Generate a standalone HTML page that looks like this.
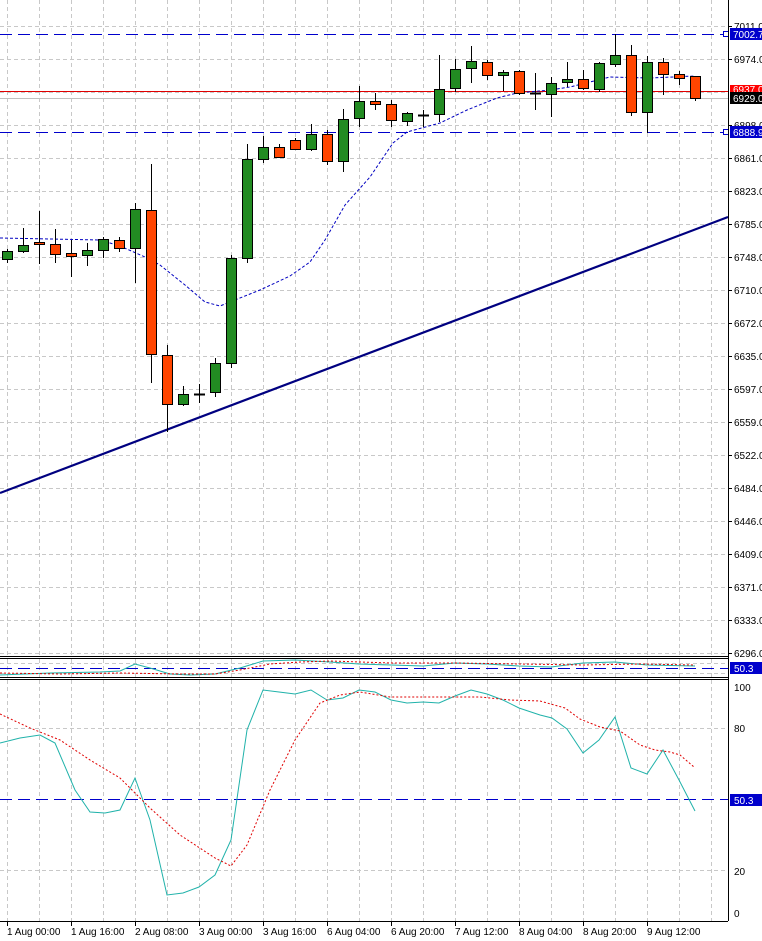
<!DOCTYPE html>
<html><head><meta charset="utf-8"><style>
html,body{margin:0;padding:0;background:#fff}
svg{display:block}
text{font-family:"Liberation Sans",sans-serif;font-size:10px;fill:#000}
</style></head><body>
<svg width="762" height="941" viewBox="0 0 762 941" xmlns="http://www.w3.org/2000/svg">
<rect width="762" height="941" fill="#fff"/>
<!-- vertical grid -->
<g stroke="#c8c8c8" stroke-dasharray="4,3" stroke-width="1">
<path d="M7.5 0V656M39.5 0V656M71.5 0V656M103.5 0V656M135.5 0V656M167.5 0V656M199.5 0V656M231.5 0V656M263.5 0V656M295.5 0V656M327.5 0V656M359.5 0V656M391.5 0V656M423.5 0V656M455.5 0V656M487.5 0V656M519.5 0V656M551.5 0V656M583.5 0V656M615.5 0V656M647.5 0V656M679.5 0V656M711.5 0V656"/>
<path d="M7.5 680V921M39.5 680V921M71.5 680V921M103.5 680V921M135.5 680V921M167.5 680V921M199.5 680V921M231.5 680V921M263.5 680V921M295.5 680V921M327.5 680V921M359.5 680V921M391.5 680V921M423.5 680V921M455.5 680V921M487.5 680V921M519.5 680V921M551.5 680V921M583.5 680V921M615.5 680V921M647.5 680V921M679.5 680V921M711.5 680V921"/>
<path d="M7.5 659V677M39.5 659V677M71.5 659V677M103.5 659V677M135.5 659V677M167.5 659V677M199.5 659V677M231.5 659V677M263.5 659V677M295.5 659V677M327.5 659V677M359.5 659V677M391.5 659V677M423.5 659V677M455.5 659V677M487.5 659V677M519.5 659V677M551.5 659V677M583.5 659V677M615.5 659V677M647.5 659V677M679.5 659V677M711.5 659V677"/>
<path d="M0 26.5H728M0 59.5H728M0 92.5H728M0 125.5H728M0 158.5H728M0 191.5H728M0 224.5H728M0 257.5H728M0 290.5H728M0 323.5H728M0 356.5H728M0 389.5H728M0 422.5H728M0 455.5H728M0 488.5H728M0 521.5H728M0 554.5H728M0 587.5H728M0 620.5H728M0 653.5H728"/>
<path d="M0 728.5H728M0 870.5H728M0 663.5H728M0 673.5H728"/>
</g>
<!-- horizontal level lines -->
<path d="M0 34.5H728M0 132.5H728" stroke="#0000cc" stroke-dasharray="12,6" stroke-width="1"/>
<path d="M0 91.5H728" stroke="#e00000" stroke-width="1"/>
<path d="M0 98.5H728" stroke="#c0c0c0" stroke-width="1"/>
<rect x="723.5" y="31.5" width="5" height="5" fill="#fff" stroke="#0000cc"/>
<rect x="723.5" y="129.5" width="5" height="5" fill="#fff" stroke="#0000cc"/>
<!-- trendline -->
<path d="M0 493L728 217" stroke="#000080" stroke-width="2.2"/>
<!-- MA -->
<polyline fill="none" stroke="#0000c0" stroke-dasharray="3,2" stroke-width="1" points="0,238 100,240 120,246 145,257 160,265 185,285 205,302 220,306 235,300 260,290 290,276 310,262 325,240 345,205 370,177 393,143 407,132 440,123 467,110 497,98 517,93 550,90 570,87 610,77 650,78 695,76"/>
<!-- candles -->
<g stroke="#000" stroke-width="1">
<path d="M7.5 249V263M23.5 228V253M39.5 211V264M55.5 229V263M71.5 240V277M87.5 243V266M103.5 237V258M119.5 237V252M135.5 203V283M151.5 164V383M167.5 345V432M183.5 386V406M199.5 384V403M215.5 358V397M231.5 255V368M247.5 144V263M263.5 136V163M279.5 144V158M295.5 138V150M311.5 124V151M327.5 130V165M343.5 109V172M359.5 86V127M375.5 93V110M391.5 100V127M407.5 112V126M423.5 110V127M439.5 55V122M455.5 59V92M471.5 46V83M487.5 60V80M503.5 70V91M519.5 70V95M535.5 73V110M551.5 77V117M567.5 62V87M583.5 70V90M599.5 62V92M615.5 34V67M631.5 45V116M647.5 56V133M663.5 58V95M679.5 71V85M695.5 76V101"/>
<g fill="#228b22">
<rect x="2.5" y="251.5" width="10" height="8"/><rect x="18.5" y="245.5" width="10" height="6"/><rect x="82.5" y="250.5" width="10" height="5"/><rect x="98.5" y="239.5" width="10" height="11"/><rect x="130.5" y="209.5" width="10" height="39"/><rect x="178.5" y="394.5" width="10" height="10"/><rect x="210.5" y="363.5" width="10" height="29"/><rect x="226.5" y="258.5" width="10" height="105"/><rect x="242.5" y="159.5" width="10" height="99"/><rect x="258.5" y="147.5" width="10" height="12"/><rect x="306.5" y="134.5" width="10" height="15"/><rect x="338.5" y="119.5" width="10" height="42"/><rect x="354.5" y="101.5" width="10" height="17"/><rect x="402.5" y="113.5" width="10" height="8"/><rect x="434.5" y="89.5" width="10" height="25"/><rect x="450.5" y="69.5" width="10" height="19"/><rect x="466.5" y="61.5" width="10" height="7"/><rect x="498.5" y="72.5" width="10" height="3"/><rect x="546.5" y="83.5" width="10" height="11"/><rect x="562.5" y="79.5" width="10" height="3"/><rect x="594.5" y="63.5" width="10" height="26"/><rect x="610.5" y="55.5" width="10" height="9"/><rect x="642.5" y="62.5" width="10" height="50"/>
</g>
<g fill="#ff4500">
<rect x="34.5" y="242.5" width="10" height="2"/><rect x="50.5" y="244.5" width="10" height="10"/><rect x="66.5" y="253.5" width="10" height="3"/><rect x="114.5" y="240.5" width="10" height="8"/><rect x="146.5" y="210.5" width="10" height="144"/><rect x="162.5" y="355.5" width="10" height="49"/><rect x="274.5" y="147.5" width="10" height="10"/><rect x="290.5" y="140.5" width="10" height="9"/><rect x="322.5" y="134.5" width="10" height="27"/><rect x="370.5" y="101.5" width="10" height="3"/><rect x="386.5" y="104.5" width="10" height="16"/><rect x="482.5" y="62.5" width="10" height="13"/><rect x="514.5" y="71.5" width="10" height="22"/><rect x="578.5" y="79.5" width="10" height="9"/><rect x="626.5" y="55.5" width="10" height="57"/><rect x="658.5" y="62.5" width="10" height="12"/><rect x="674.5" y="74.5" width="10" height="4"/><rect x="690.5" y="76.5" width="10" height="22"/>
</g>
<path d="M194 394.5H205M418 115.5H429M530 93.5H541" stroke-width="2"/>
</g>
<!-- panel borders -->
<g stroke="#000" stroke-width="1">
<path d="M0 656.5H728M0 658.5H728M0 677.5H728M0 679.5H728M0 921.5H728M728.5 0V921"/>
</g>
<!-- mini panel -->
<path d="M0 668.5H728" stroke="#0000cc" stroke-dasharray="12,6"/>
<polyline fill="none" stroke="#20b2aa" points="0,675 50,673 100,672 120,671 135,664 150,668 170,674 190,675 215,674 240,668 263,661 295,660 330,662 359,664 391,665 423,666 455,663 487,664 519,666 551,667 583,663 615,662 647,665 695,666"/>
<polyline fill="none" stroke="#e00000" stroke-dasharray="2,2" points="0,673 60,674 120,673 180,674 215,674 240,670 270,664 300,662 330,661 391,663 455,663 519,664 583,665 640,664 695,665"/>
<!-- lower panel -->
<path d="M0 799.5H728" stroke="#0000cc" stroke-dasharray="12,6"/>
<polyline fill="none" stroke="#20b2aa" stroke-width="1" points="0,743 20,738 40,735 55,743 75,790 90,812 105,813 120,810 135,778 150,820 167,895 183,893 199,887 215,875 231,840 247,730 263,690 279,692 295,694 311,690 327,700 343,698 359,690 375,692 391,700 407,703 423,702 439,703 455,696 471,690 487,694 503,700 519,708 540,715 552,718 567,729 583,753 599,740 615,717 631,768 647,774 663,750 679,780 695,811"/>
<polyline fill="none" stroke="#e00000" stroke-dasharray="2,2" stroke-width="1" points="0,714 30,728 60,740 90,760 120,778 150,808 180,835 215,858 231,866 247,845 270,790 295,740 320,703 340,695 360,692 390,697 420,697 450,697 480,697 510,700 540,701 565,708 580,719 600,727 620,731 640,745 655,750 670,752 680,755 694,767"/>
<!-- right axis labels -->
<g>
<path d="M728 26.5h4M728 59.5h4M728 125.5h4M728 158.5h4M728 191.5h4M728 224.5h4M728 257.5h4M728 290.5h4M728 323.5h4M728 356.5h4M728 389.5h4M728 422.5h4M728 455.5h4M728 488.5h4M728 521.5h4M728 554.5h4M728 587.5h4M728 620.5h4M728 653.5h4" stroke="#000"/>
<text x="734" y="30">7011.0</text><text x="734" y="63">6974.0</text><text x="734" y="129">6898.0</text><text x="734" y="162">6861.0</text><text x="734" y="195">6823.0</text><text x="734" y="228">6785.0</text><text x="734" y="261">6748.0</text><text x="734" y="294">6710.0</text><text x="734" y="327">6672.0</text><text x="734" y="360">6635.0</text><text x="734" y="393">6597.0</text><text x="734" y="426">6559.0</text><text x="734" y="459">6522.0</text><text x="734" y="492">6484.0</text><text x="734" y="525">6446.0</text><text x="734" y="558">6409.0</text><text x="734" y="591">6371.0</text><text x="734" y="624">6333.0</text><text x="734" y="657">6296.0</text>
<rect x="730" y="28" width="32" height="12" fill="#0000cc"/><text x="733" y="38" style="fill:#fff">7002.7</text>
<rect x="730" y="85" width="32" height="8" fill="#ff0000"/><text x="733" y="93" style="fill:#fff">6937.0</text>
<rect x="730" y="92" width="32" height="12" fill="#000"/><text x="733" y="102" style="fill:#fff">6929.0</text>
<rect x="730" y="126" width="32" height="12" fill="#0000cc"/><text x="733" y="136" style="fill:#fff">6888.9</text>
<rect x="730" y="662" width="32" height="12" fill="#0000cc"/><text x="734" y="672" style="fill:#fff">50.3</text>
<text x="734" y="691">100</text><text x="734" y="732">80</text>
<rect x="730" y="794" width="32" height="12" fill="#0000cc"/><text x="734" y="804" style="fill:#fff">50.3</text>
<text x="734" y="875">20</text><text x="734" y="917">0</text>
</g>
<!-- time axis -->
<g stroke="#000"><path d="M7.5 921v5M71.5 921v5M135.5 921v5M199.5 921v5M263.5 921v5M327.5 921v5M391.5 921v5M455.5 921v5M519.5 921v5M583.5 921v5M647.5 921v5"/></g>
<g>
<text x="7" y="935">1 Aug 00:00</text><text x="71" y="935">1 Aug 16:00</text><text x="135" y="935">2 Aug 08:00</text><text x="199" y="935">3 Aug 00:00</text><text x="263" y="935">3 Aug 16:00</text><text x="327" y="935">6 Aug 04:00</text><text x="391" y="935">6 Aug 20:00</text><text x="455" y="935">7 Aug 12:00</text><text x="519" y="935">8 Aug 04:00</text><text x="583" y="935">8 Aug 20:00</text><text x="647" y="935">9 Aug 12:00</text>
</g>
</svg>
</body></html>
